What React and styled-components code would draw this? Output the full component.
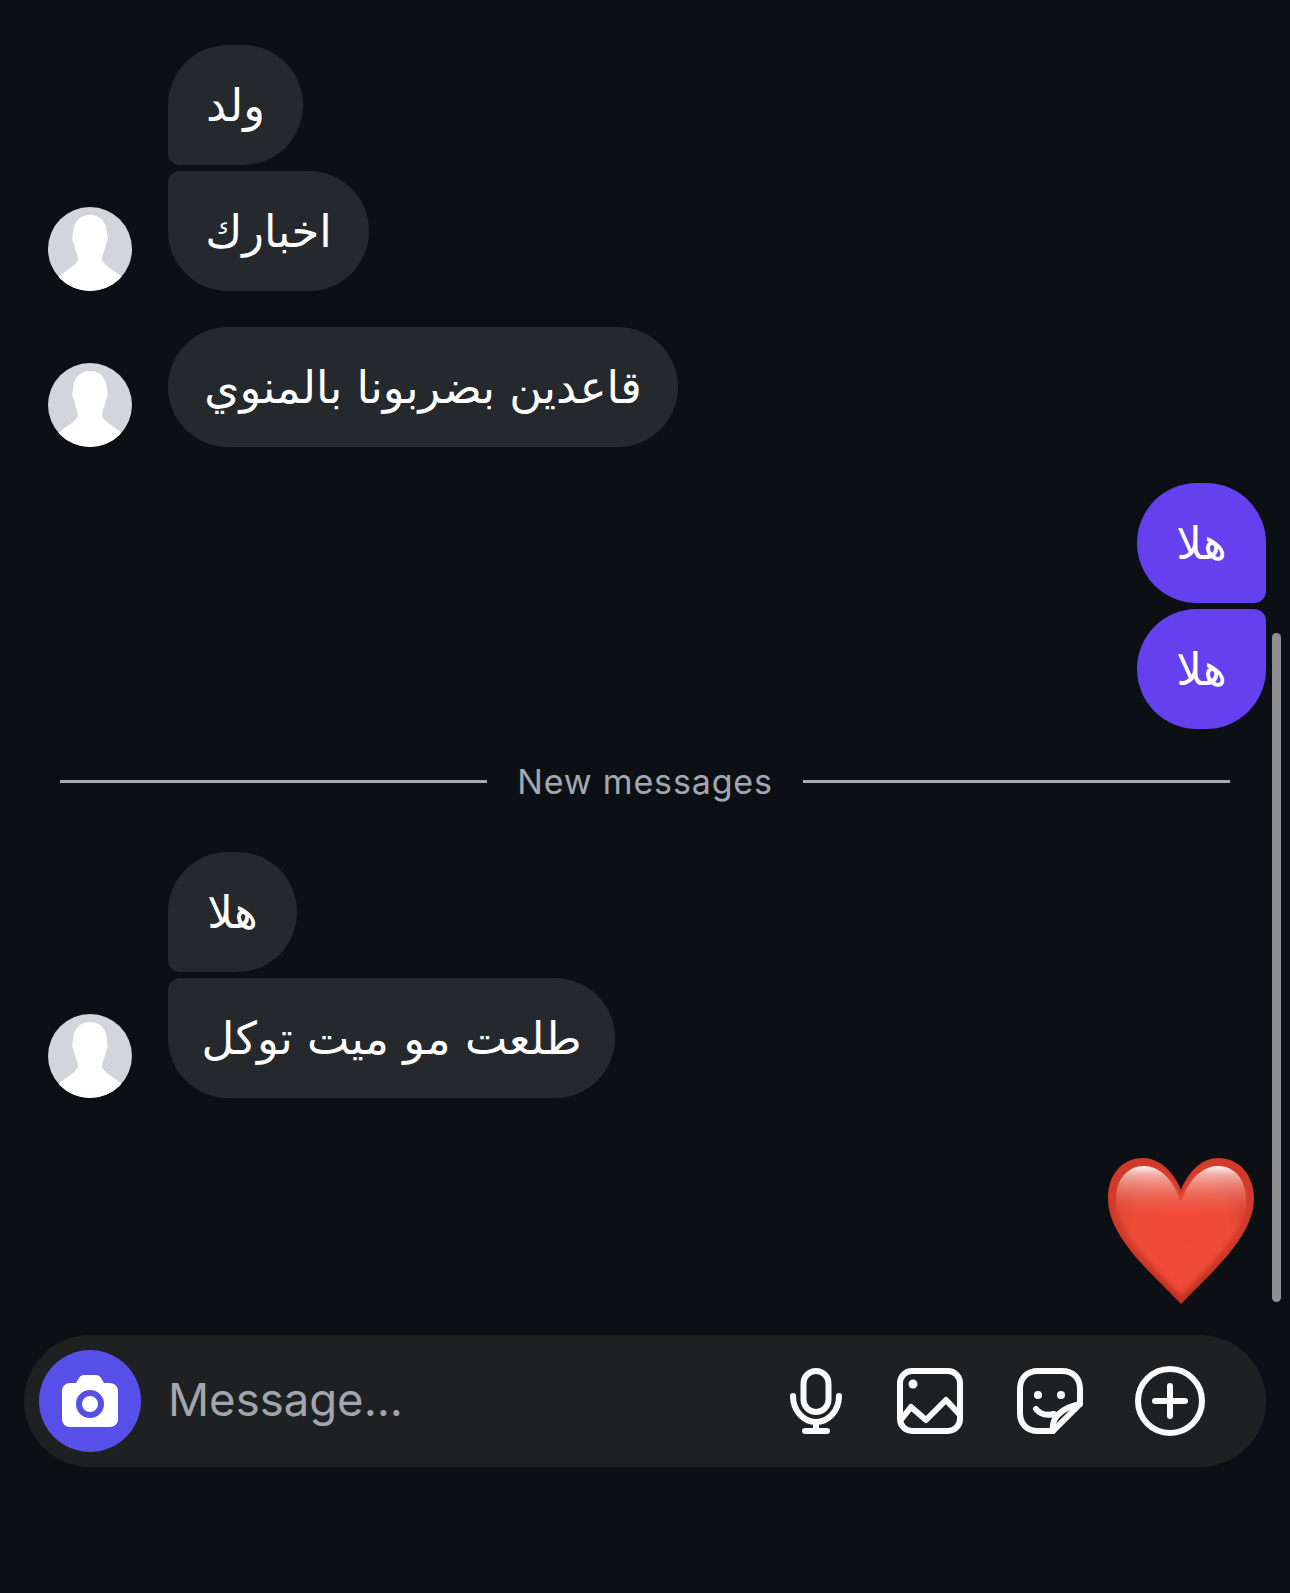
import React from 'react';
import styled, { createGlobalStyle } from 'styled-components';

const GlobalStyle = createGlobalStyle`
  html, body {
    margin: 0;
    padding: 0;
    background: #0c1014;
  }
`;

const Page = styled.div`
  position: relative;
  width: 1290px;
  height: 1593px;
  overflow: hidden;
  background: #0c1014;
  font-family: Inter, "Noto Sans", sans-serif;
`;

const Thread = styled.div`
  display: flex;
  flex-direction: column;
  height: 1335px;
  box-sizing: border-box;
  padding: 45px 24px 0 48px;
`;

const Group = styled.div`
  display: flex;
  flex-direction: column;
  gap: 6px;
  margin-top: ${(p) => p.$top || 0}px;
  align-items: ${(p) => (p.$mine ? 'flex-end' : 'flex-start')};
`;

const Row = styled.div`
  display: flex;
  align-items: flex-end;
  gap: 36px;
  padding-left: ${(p) => (p.$indent ? 120 : 0)}px;
`;

const Avatar = styled.div`
  width: 84px;
  height: 84px;
  border-radius: 50%;
  overflow: hidden;
  background: #d3d5da;
  svg {
    display: block;
  }
`;

const radii = {
  solo: '60px',
  theirsFirst: '60px 60px 60px 12px',
  theirsLast: '12px 60px 60px 60px',
  mineFirst: '60px 60px 12px 60px',
  mineLast: '60px 12px 60px 60px',
};

const Bubble = styled.div`
  box-sizing: border-box;
  width: ${(p) => p.$width}px;
  height: 120px;
  display: flex;
  align-items: center;
  justify-content: center;
  border-radius: ${(p) => radii[p.$shape]};
  background: ${(p) => (p.$mine ? '#6440ef' : '#25292e')};
  color: #fff;
  font-family: "DejaVu Sans", sans-serif;
  font-size: 45px;
  white-space: nowrap;
`;

const Divider = styled.div`
  display: flex;
  align-items: center;
  gap: 30px;
  margin: 28px 36px 47px 12px;
  height: 48px;
  color: #a3a7b0;
  font-size: 34px;
  letter-spacing: 0.85px;
`;

const Rule = styled.div`
  flex: 1;
  height: 3px;
  background: #a8abb3;
`;

const HeartRow = styled.div`
  display: flex;
  justify-content: flex-end;
  margin-top: 60px;
  padding-right: 12px;
  svg {
    display: block;
  }
`;

const Scrollbar = styled.div`
  position: absolute;
  top: 633px;
  left: 1272px;
  width: 9px;
  height: 669px;
  border-radius: 5px;
  background: #8e8e93;
`;

const Composer = styled.div`
  display: flex;
  align-items: center;
  height: 132px;
  box-sizing: border-box;
  margin: 0 24px;
  padding: 0 15px;
  border-radius: 66px;
  background: #1e2022;
`;

const CameraButton = styled.div`
  width: 102px;
  height: 102px;
  flex: none;
  display: flex;
  align-items: center;
  justify-content: center;
  border-radius: 50%;
  background: #5650e9;
`;

const Placeholder = styled.div`
  flex: 1;
  margin: 0 0 3px 27px;
  color: #a2a5ae;
  font-size: 45.5px;
`;

const Tools = styled.div`
  display: flex;
  align-items: center;
  gap: 54px;
  padding-right: 46px;
  svg {
    display: block;
  }
  svg:first-child {
    margin-right: 1px;
  }
  svg:last-child {
    margin-left: -2px;
  }
`;

const AvatarIcon = () => (
  <Avatar>
    <svg width="84" height="84" viewBox="0 0 84 84">
      <path
        d="M42 8C53 8 59 16 59 27C60 30 60 34 58 37C57 44 54 47 54 53C56 57 61 61 66 64L74 70L84 84H0L10 70L18 64C23 61 28 57 30 53C30 47 27 44 26 37C24 34 24 30 25 27C25 16 31 8 42 8Z"
        fill="#fff"
      />
    </svg>
  </Avatar>
);

const CameraIcon = () => (
  <svg width="56" height="52" viewBox="0 0 56 52">
    <path
      d="M8 8H14L17 3C18 1 20 0 22 0H34C36 0 38 1 39 3L42 8H48C52 8 56 11 56 16V44C56 49 52 52 48 52H8C4 52 0 49 0 44V16C0 11 4 8 8 8Z"
      fill="#fff"
    />
    <circle cx="28" cy="29" r="11" fill="none" stroke="#5650e9" strokeWidth="6" />
  </svg>
);

const MicIcon = () => (
  <svg width="52" height="66" viewBox="0 0 52 66" fill="none" stroke="#fafafa" strokeWidth="6" strokeLinecap="round">
    <rect x="13.5" y="3" width="25" height="41" rx="12.5" />
    <path d="M3 28C3 42 13 54 26 54C39 54 49 42 49 28" />
    <path d="M26 54V63M15 63H37" />
  </svg>
);

const ImageIcon = () => (
  <svg width="66" height="66" viewBox="0 0 66 66" fill="none" stroke="#fafafa" strokeWidth="6" strokeLinejoin="round">
    <rect x="3" y="3" width="60" height="60" rx="12" />
    <circle cx="16" cy="16" r="4.5" fill="#fafafa" stroke="none" />
    <path d="M3 53L14 39L29 52L49 32L64 48" />
  </svg>
);

const StickerIcon = () => (
  <svg width="66" height="66" viewBox="0 0 66 66" fill="none" stroke="#fafafa" strokeWidth="6" strokeLinecap="round" strokeLinejoin="round">
    <path d="M21 3H45C56 3 63 10 63 21V36L36 63H21C10 63 3 56 3 45V21C3 10 10 3 21 3Z" />
    <path d="M36 63C34 50 44 40 63 36" />
    <circle cx="21" cy="27" r="4" fill="#fafafa" stroke="none" />
    <circle cx="44" cy="27" r="4" fill="#fafafa" stroke="none" />
    <path d="M19 41C23 46 29 48 37 46" />
  </svg>
);

const PlusIcon = () => (
  <svg width="70" height="70" viewBox="0 0 70 70" fill="none" stroke="#fafafa" strokeWidth="6" strokeLinecap="round">
    <circle cx="35" cy="35" r="32" />
    <path d="M35 20V50M20 35H50" />
  </svg>
);

const HeartIcon = () => (
  <svg width="146" height="146" viewBox="0 0 146 146">
    <defs>
      <linearGradient id="heartRim" x1="0" y1="0" x2="0" y2="1">
        <stop offset="0" stopColor="#d13b2b" />
        <stop offset="0.5" stopColor="#cf3a2a" />
        <stop offset="1" stopColor="#c5301f" />
      </linearGradient>
      <radialGradient id="heartBody" cx="0.5" cy="0.55" r="0.62">
        <stop offset="0" stopColor="#f04a36" />
        <stop offset="0.62" stopColor="#ee4c39" />
        <stop offset="1" stopColor="#d03a2a" />
      </radialGradient>
      <linearGradient id="heartGloss" x1="0" y1="0" x2="0" y2="1">
        <stop offset="0" stopColor="#fff" stopOpacity="0.95" />
        <stop offset="0.18" stopColor="#f6c4bc" stopOpacity="0.8" />
        <stop offset="1" stopColor="#f0523f" stopOpacity="0" />
      </linearGradient>
      <filter id="heartBlur" x="-20%" y="-20%" width="140%" height="140%">
        <feGaussianBlur stdDeviation="2.5" />
      </filter>
    </defs>
    <path
      d="M73 32C65 12 50 0 35 0C14 0 0 17 0 40C0 78 40 112 73 146C106 112 146 78 146 40C146 17 131 0 110 0C95 0 81 12 73 32Z"
      fill="url(#heartRim)"
    />
    <path
      d="M73 42C65 20 50 7 36 7C20 7 7 21 7 41C7 74 45 108 73 138C101 108 139 74 139 41C139 21 126 7 110 7C96 7 81 20 73 42Z"
      fill="url(#heartBody)"
      filter="url(#heartBlur)"
    />
    <path
      d="M72 42C65 20 50 8 36 8C20 8 8 21 8 41V60H138V41C138 21 126 8 110 8C96 8 81 20 74 42Z"
      fill="url(#heartGloss)"
    />
  </svg>
);

export default function App() {
  return (
    <Page>
      <GlobalStyle />
      <Thread>
        <Group>
          <Row $indent>
            <Bubble $shape="theirsFirst" $width={135} dir="rtl">ولد</Bubble>
          </Row>
          <Row>
            <AvatarIcon />
            <Bubble $shape="theirsLast" $width={201} dir="rtl">اخبارك</Bubble>
          </Row>
        </Group>
        <Group $top={36}>
          <Row>
            <AvatarIcon />
            <Bubble $shape="solo" $width={510} dir="rtl">قاعدين بضربونا بالمنوي</Bubble>
          </Row>
        </Group>
        <Group $top={36} $mine>
          <Bubble $mine $shape="mineFirst" $width={129} dir="rtl">هلا</Bubble>
          <Bubble $mine $shape="mineLast" $width={129} dir="rtl">هلا</Bubble>
        </Group>
        <Divider>
          <Rule />
          <span>New messages</span>
          <Rule />
        </Divider>
        <Group>
          <Row $indent>
            <Bubble $shape="theirsFirst" $width={129} dir="rtl">هلا</Bubble>
          </Row>
          <Row>
            <AvatarIcon />
            <Bubble $shape="theirsLast" $width={447} dir="rtl">طلعت مو ميت توكل</Bubble>
          </Row>
        </Group>
        <HeartRow>
          <HeartIcon />
        </HeartRow>
      </Thread>
      <Composer>
        <CameraButton>
          <CameraIcon />
        </CameraButton>
        <Placeholder>Message...</Placeholder>
        <Tools>
          <MicIcon />
          <ImageIcon />
          <StickerIcon />
          <PlusIcon />
        </Tools>
      </Composer>
      <Scrollbar />
    </Page>
  );
}
